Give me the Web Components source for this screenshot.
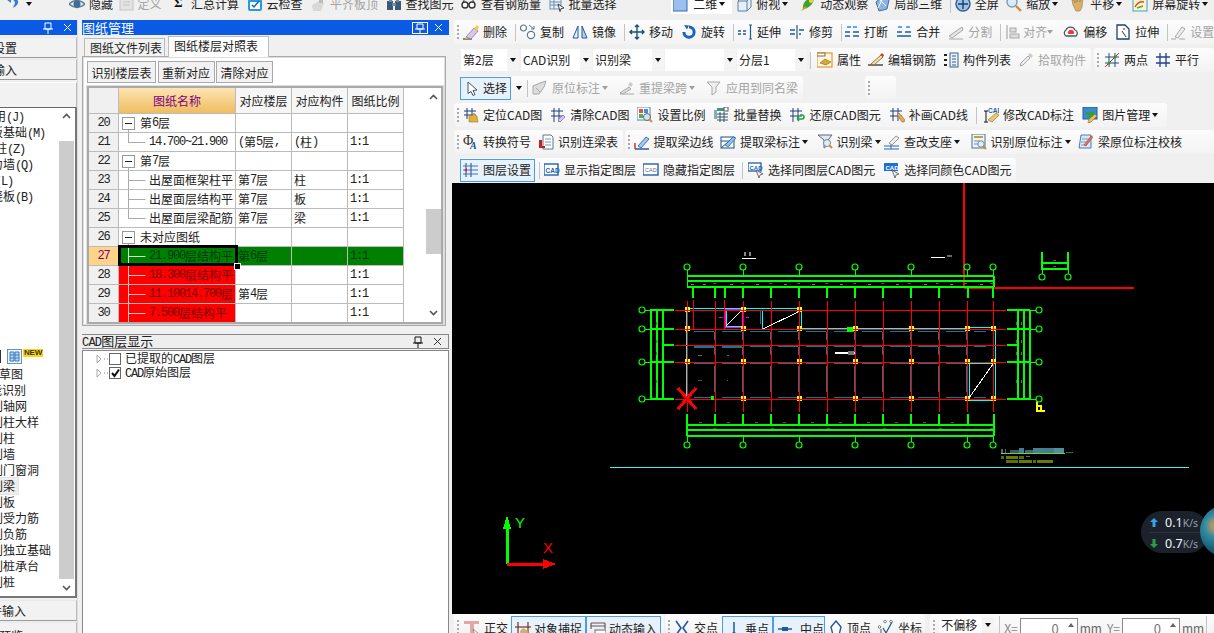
<!DOCTYPE html>
<html lang="zh"><head><meta charset="utf-8"><title>图纸管理</title>
<style>
html,body{margin:0;height:633px;overflow:hidden;background:#f0f0f0;color:#222;font:12px/16px "Noto Sans CJK SC","Noto Sans",sans-serif}
</style></head><body>
<x-app>
  <x-row slot="top" style="height:20px;margin-top:-6px;padding-left:5px">
    <x-tool i="undo" caret style="margin-right:37px;gap:7px"></x-tool>
    <x-bar plain style="gap:7.5px">
      <x-tool i="eye">隐藏</x-tool><x-tool i="def" off style="margin-left:-3px">定义</x-tool><x-tool i="sum" style="margin-left:2px">汇总计算</x-tool><x-tool i="cloudchk">云检查</x-tool><x-tool i="flat" off>平齐板顶</x-tool><x-tool i="bino">查找图元</x-tool><x-tool i="glasses">查看钢筋量</x-tool><x-tool i="batch">批量选择</x-tool>
      <x-tool i="cube2" caret style="margin-left:47px;background:#fff;padding:0 7px 0 2px">二维</x-tool>
      <x-tool i="cube" caret style="margin-left:-3.5px">俯视</x-tool><x-tool i="orbit" style="margin-left:4.5px">动态观察</x-tool><x-tool i="cube3" style="margin-left:-1.5px">局部三维</x-tool><x-sep></x-sep><x-tool i="full" style="margin-left:-3.5px">全屏</x-tool><x-tool i="zoom" caret>缩放</x-tool><x-tool i="hand" caret style="margin-left:4.5px">平移</x-tool><x-tool i="rot2" caret style="margin-left:2.5px">屏幕旋转</x-tool>
    </x-bar>
  </x-row>

  <x-side slot="left"></x-side>

  <x-drawings slot="mid"></x-drawings>
  <x-layers slot="mid2"></x-layers>

  <x-row slot="right" style="margin-top:0">
    <x-bar style="gap:8px;margin-left:4px;padding-left:3px;flex:1"><x-grip></x-grip>
      <x-tool i="erase" style="margin-left:-4px">删除</x-tool><x-sep></x-sep><x-tool i="copy" style="margin-left:-4px">复制</x-tool><x-tool i="mirror">镜像</x-tool><x-sep></x-sep><x-tool i="move" style="margin-left:-4px">移动</x-tool><x-tool i="rotate">旋转</x-tool><x-sep></x-sep><x-tool i="extend" style="margin-left:-5px">延伸</x-tool><x-tool i="trim">修剪</x-tool><x-sep></x-sep><x-tool i="brk" style="margin-left:-6px">打断</x-tool><x-tool i="merge">合并</x-tool><x-tool i="split" off>分割</x-tool><x-sep></x-sep><x-tool i="align" off caret style="margin-left:-4px;gap:2px">对齐</x-tool><x-tool i="offset" style="margin-left:2px">偏移</x-tool><x-tool i="stretch">拉伸</x-tool><x-sep></x-sep><x-tool i="pen" off style="margin-left:-6px">设置</x-tool>
    </x-bar>
  </x-row>
  <x-row slot="right" style="margin-top:4px">
    <x-combo style="width:58px;margin-left:11px">第2层</x-combo><x-combo style="width:71px;margin-left:2px">CAD识别</x-combo><x-combo style="width:71px;margin-left:1px">识别梁</x-combo><x-combo style="width:71px;margin-left:1px"></x-combo><x-combo style="width:70px;margin-left:1px">分层1</x-combo>
    <x-bar style="gap:7px;margin-left:3px;padding-right:5px"><x-sep></x-sep><x-tool i="prop" style="margin-left:-1px">属性</x-tool><x-tool i="rebar">编辑钢筋</x-tool><x-tool i="list">构件列表</x-tool><x-tool i="pick" off>拾取构件</x-tool></x-bar>
    <x-bar style="gap:7px;margin-left:3px;padding-left:3px;flex:1"><x-grip></x-grip><x-tool i="two" style="margin-left:-2px">两点</x-tool><x-tool i="para">平行</x-tool></x-bar>
  </x-row>
  <x-row slot="right" style="margin-top:4px">
    <x-bar style="gap:5px;margin-left:10px;padding-right:5px">
      <x-tool i="cursor" on style="width:51px;padding-left:3px;box-sizing:border-box;height:23px;gap:3px">选择</x-tool><x-caret></x-caret><x-sep style="margin-right:-1px"></x-sep><x-tool i="label" off caret>原位标注</x-tool><x-tool i="span" off caret style="margin-left:6px">重提梁跨</x-tool><x-tool i="apply" off style="margin-left:6px">应用到同名梁</x-tool>
    </x-bar>
    <x-bar style="margin-left:62px;width:31px;padding-left:3px;box-sizing:border-box"><x-grip></x-grip></x-bar>
  </x-row>
  <x-row slot="right" style="margin-top:3px">
    <x-bar style="gap:8px;margin-left:4px;padding:0 9px 0 3px"><x-grip></x-grip>
      <x-tool i="locate" style="margin-left:-4px">定位CAD图</x-tool><x-tool i="clear">清除CAD图</x-tool><x-tool i="scale">设置比例</x-tool><x-tool i="replace">批量替换</x-tool><x-tool i="restore">还原CAD图元</x-tool><x-tool i="draw">补画CAD线</x-tool><x-sep></x-sep><x-tool i="cadedit" style="margin-left:-2px">修改CAD标注</x-tool><x-tool i="pic" caret>图片管理</x-tool>
    </x-bar>
  </x-row>
  <x-row slot="right" style="margin-top:3px">
    <x-bar style="gap:7px;margin-left:4px;padding:0 5px 0 3px"><x-grip></x-grip><x-tool i="phi" style="margin-left:-3px">转换符号</x-tool><x-tool i="lbtable">识别连梁表</x-tool></x-bar>
    <x-bar style="gap:6.5px;margin-left:2px;padding-left:3px;flex:1"><x-grip></x-grip><x-tool i="edge" style="margin-left:-3px">提取梁边线</x-tool><x-tool i="mark" caret>提取梁标注</x-tool><x-tool i="recog" caret style="margin-left:2px">识别梁</x-tool><x-tool i="seat" caret style="margin-left:-3px">查改支座</x-tool><x-tool i="inplace" caret style="margin-left:4px">识别原位标注</x-tool><x-tool i="check" style="margin-left:1px">梁原位标注校核</x-tool></x-bar>
  </x-row>
  <x-row slot="right" style="margin-top:4px">
    <x-bar style="gap:7px;margin-left:10px;padding-right:5px">
      <x-tool i="layer" on style="width:75px;padding-left:2px;box-sizing:border-box;height:23px;gap:4px">图层设置</x-tool><x-sep style="margin-left:-3px"></x-sep><x-tool i="cadshow" style="margin-left:-3px">显示指定图层</x-tool><x-tool i="cadhide">隐藏指定图层</x-tool><x-sep></x-sep><x-tool i="cadsel" style="margin-left:-2px">选择同图层CAD图元</x-tool><x-tool i="cadsel2" style="margin-left:2px">选择同颜色CAD图元</x-tool>
    </x-bar>
  </x-row>

  <x-cad slot="canvas"><x-speed></x-speed></x-cad>

  <x-row slot="status" style="height:19px;align-items:flex-start">
    <x-bar low style="gap:6px;margin-left:4px;padding:0 3px;height:19px"><x-grip style="margin-top:6px"></x-grip><x-tool i="ortho" low style="margin-left:-2px;margin-right:-3px;gap:5px">正交</x-tool><x-tool i="snap" on low style="padding:0 3px;gap:3px;margin-right:-6px">对象捕捉</x-tool><x-tool i="dyn" on low style="padding:0 3px;gap:3px">动态输入</x-tool></x-bar>
    <x-bar low style="gap:6px;margin-left:1px;padding:0 3px;height:19px"><x-grip style="margin-top:6px"></x-grip><x-tool i="cross" low style="margin-left:-2px">交点</x-tool><x-tool i="perp" on low style="padding:0 3px;gap:3px;margin-left:-2px;margin-right:-6px">垂点</x-tool><x-tool i="midp" on low style="padding:0 0 0 3px;gap:7px">中点</x-tool><x-tool i="vert" low style="gap:1px;margin-left:-1px">顶点</x-tool><x-tool i="coord" low style="margin-left:1px">坐标</x-tool></x-bar>
    <x-bar low style="gap:2px;margin-left:5px;padding:0 3px;height:19px;flex:1"><x-grip style="margin-top:6px"></x-grip><x-combo low style="width:55px;margin-left:2px;margin-top:3px;height:16px">不偏移</x-combo><x-sep style="margin:2px 0 0 3px"></x-sep><span style="color:#888;margin:6px 0 0 2px">X=</span><x-spin>0</x-spin><span style="color:#666;margin-top:6px">mm</span><span style="color:#888;margin:6px 0 0 3px">Y=</span><x-spin>0</x-spin><span style="color:#666;margin-top:6px">mm</span><x-sep style="margin-top:2px"></x-sep></x-bar>
  </x-row>
</x-app>

<script>
const B='#1e5aa0',G='#a8a8a8',O='#e8a030';
const line=(d,c=B,w=1)=>`<path d="${d}" fill="none" stroke="${c}" stroke-width="${w}"/>`;
const ICON={
undo:`<path d="M3 1h5a5 5 0 0 1 3 9l-3 2 1-3a3 3 0 0 0-1-5H6v3L1 3z" fill="#3a78d8"/>`,
eye:line('M0 8Q8 1 16 8Q8 15 0 8Z','#5a7a96',1.4)+`<circle cx="8" cy="8" r="3.6" fill="#3f6f98"/>`,
def:`<rect x="2" y="2" width="13" height="12" fill="#e4e4e4" stroke="#c4c4c4"/>`+line('M5 6h7M5 9h7','#c4c4c4'),
sum:`<text x="3" y="11" font-size="13" font-weight="700" font-family="Liberation Serif" fill="#111">Σ</text>`,
cloudchk:`<rect x="1" y="3" width="14" height="12" rx="2" fill="#2a9ae0"/><rect x="3" y="6" width="10" height="7" fill="#fff"/>`+line('M5 9l2 2 5-6','#1868b0',1.5),
flat:`<path d="M2 9l9-5 3 3-3 8H3z" fill="#d8d8d8"/><rect x="9" y="2" width="4" height="5" fill="#bbb"/>`,
bino:`<rect x="1" y="5" width="6" height="9" fill="#3b5a78"/><rect x="9" y="5" width="6" height="9" fill="#3b5a78"/><rect x="3" y="1" width="3" height="5" fill="#6b8aa8"/><rect x="10" y="1" width="3" height="5" fill="#6b8aa8"/><rect x="6" y="7" width="4" height="3" fill="#789"/>`,
glasses:`<circle cx="4" cy="9" r="3" fill="#fff" stroke="#333" stroke-width="1.4"/><circle cx="11" cy="9" r="3" fill="#fff" stroke="#333" stroke-width="1.4"/>`+line('M2 6l2-3M13 6l-2-3','#333'),
batch:`<rect x="1" y="2" width="11" height="11" fill="#e8f0f8" stroke="#6f8fb0"/>`+line('M1 6h11M1 9h11M5 2v11','#6f8fb0')+`<path d="M9 8l6 4-3 .6-1 3z" fill="#fff" stroke="#444"/>`,
cube2:`<rect x="0" y="1" width="14" height="14" fill="#9cc0ee" stroke="#3566b0"/>`,
cube:`<path d="M2 5l4-4h9v10l-4 4H2z" fill="#e4eff8" stroke="#5e7f9e"/>`+line('M2 5h9v10M11 5l4-4','#5e7f9e'),
orbit:`<path d="M3 13C2 7 7 2 13 1c2 3-1 9-6 11z" fill="#43a02e"/><path d="M1 15l4-5 2 2z" fill="#c8a020"/><circle cx="11" cy="5" r="2" fill="#e8d848"/>`,
cube3:`<path d="M2 6l6-5 7 3-2 9-8 2z" fill="#8bb4de" stroke="#3a6ea8"/>`+line('M5 3l7 7M9 2l-5 10','#fff'),
full:`<circle cx="8" cy="8" r="7" fill="#9ec2e8" stroke="#345e8c" stroke-width="1.4"/>`+line('M8 3v10M3 8h10','#1d3f66',1.4),
zoom:`<circle cx="6" cy="6" r="5" fill="#d8ebfa" stroke="#7f9cb8" stroke-width="1.4"/>`+line('M10 10l5 5','#c89030',2.4),
hand:`<path d="M3 9l-1-5 2 0 1 3V2h2v4l1-5h2v5l1-4h2l-1 9-2 4H6z" fill="#d8b068" stroke="#9a7838" stroke-width=".6"/>`,
rot2:`<rect x="1" y="3" width="14" height="12" fill="#fff4c8" stroke="#3aa0d8"/><path d="M3 11q3-6 9-5" fill="none" stroke="#e04a30" stroke-width="1.5"/><path d="M5 12l6-2" stroke="#40b040" stroke-width="1.5"/>`,
erase:line('M0 15h9','#222',1)+`<path d="M3 13l8-9 4 3-7 8z" fill="#d8c8e8" stroke="#8060b0" stroke-width=".7"/><path d="M11 4l3-3 2 2-2 4z" fill="#f0d040"/><path d="M3 13l3 2-4 0z" fill="#e8a030"/>`,
copy:`<circle cx="3.5" cy="4" r="3" fill="#fff" stroke="#5a7894" stroke-width="1.2"/><circle cx="11" cy="11" r="3.6" fill="#fff" stroke="#5a7894" stroke-width="1.2"/>`+line('M9 1l5 4m0-3v3h-3','#5a7894'),
mirror:`<path d="M1 14L6 2v12z" fill="#eaf2fa" stroke="${B}"/><path d="M15 14L10 2v12z" fill="#b8d0ea" stroke="${B}"/>`,
move:line('M8 1v14M1 8h14M6 3l2-2 2 2M6 13l2 2 2-2M3 6L1 8l2 2M13 6l2 2-2 2','#17507e',1.4),
rotate:`<path d="M8 1.5v3A3.6 3.6 0 1 1 4.4 8H1.4A6.6 6.6 0 1 0 8 1.5z" fill="#1c62c0"/><path d="M3 1l5 .5-2 4z" fill="#1c62c0"/>`,
extend:line('M1 7h3M1 10h3M6 7h3M6 10h3',B,1.4)+line('M12 1h3M12 15h3M13.5 1v14',B,1.2),
trim:line('M8 1v14',B,1.2)+line('M1 6h5M1 10h5M10 6h5M10 10h2',B,1.3),
brk:line('M1 12h5M9 12h6M1 8h5M9 8h6',B,1.4)+line('M3 3h4M13 3H9','#2090e0',1.4),
merge:line('M1 12h14M1 8h5M9 8h6',B,1.4)+line('M2 3h4M14 3h-4','#2090e0',1.4),
split:`<path d="M1 12L14 3l1 3L4 14z" fill="#e4e4e4" stroke="${G}"/>`+line('M1 15h14',G),
align:line('M2 1v14',G,1.2)+`<rect x="5" y="4" width="6" height="4" fill="#ddd" stroke="${G}"/><rect x="5" y="10" width="9" height="4" fill="#ddd" stroke="${G}"/>`,
offset:`<path d="M3 12a3.5 3.5 0 0 1 0-6 5 5 0 0 1 9 0 3.5 3.5 0 0 1 1 6z" fill="#fff" stroke="#555" stroke-width="1.3"/><path d="M5.5 10a2 2 0 0 1 0-3 3 3 0 0 1 5 0 2 2 0 0 1 0 3z" fill="#e04040"/>`,
stretch:`<path d="M2 1h8l4 4v10H2z" fill="#fff" stroke="#1d3f7a" stroke-width="1.3"/>`+line('M7 7l4 6M8 5h2','#333'),
pen:line('M1 15h5M9 15h6',G)+`<path d="M5 13l7-10 3 2-7 9z" fill="#eee" stroke="${G}"/>`,
prop:`<rect x="0" y="1" width="15" height="14" fill="#fff7e8" stroke="${O}" stroke-width="1.3"/><rect x="0" y="1" width="8" height="3" fill="#fff" stroke="#8a6a30"/><path d="M3 11l5-4 6 3-5 3z" fill="#d8a838" stroke="#a07018" stroke-width=".7"/>`,
rebar:line('M0 13h15','#222',1.2)+`<path d="M3 12L13 3l2 2-9 8z" fill="#f0e0b0" stroke="#8a5a20" stroke-width=".8"/><path d="M12 3l2-2 2 2-1 2z" fill="#d04030"/>`,
list:`<rect x="7" y="1" width="8" height="14" fill="#eaf1f8" stroke="#39618f"/>`+line('M9 4h4M9 7h4M9 10h4M9 13h4','#39618f')+line('M1 3h3M1 8h3M1 13h3','#222',2),
pick:`<path d="M2 14l1-3 7-7 2 2-7 7z" fill="#eee" stroke="${G}"/><path d="M10 3l2-2 3 3-2 2z" fill="#ccc"/>`,
two:line('M5 1v14M11 1v14M1 5h14M1 11h14','#1d4f86')+line('M1 15L15 1','#d02020')+`<circle cx="5" cy="11" r="1.5" fill="#20a020"/><circle cx="11" cy="5" r="1.5" fill="#20a020"/>`,
para:line('M5 1v14M11 1v14M1 5h14M1 11h14','#26408c',1.3),
cursor:`<path d="M4 2l9 8-4 .5 2 4-2 1-2-4-3 2z" fill="#fff" stroke="#456" stroke-width="1"/>`,
label:`<path d="M1 14V6l7-3 6-2-2 6-5 7z" fill="#ddd" stroke="${G}"/>`+line('M4 8l4 4',G),
span:line('M1 14h14',G)+`<path d="M1 13l9-6 2 2-8 5z" fill="#ddd" stroke="${G}"/><path d="M11 2l3 2-2 3-3-2z" fill="#ccc"/>`,
apply:`<path d="M1 2h13l-4 5v5l-4 3V7z" fill="#eee" stroke="${G}"/>`,
locate:line('M4 1v11M9 1v11M1 4h12M1 8h12','#1d3f7a')+`<path d="M6 15V9l2-1 1 1 2-3 1 2 2 1 1 6z" fill="#e0b040" stroke="#a07820" stroke-width=".6"/>`,
clear:line('M4 1v14M9 1v14M1 4h12M1 9h12','#1d3f7a')+`<path d="M8 13l5-5 2 2-5 5z" fill="#d8c8e8" stroke="#8060b0" stroke-width=".7"/>`,
scale:`<rect x="0" y="0" width="13" height="13" fill="#fff" stroke="#5a7ea8"/><rect x="2" y="2" width="4" height="4" fill="#e05050"/><rect x="7" y="2" width="4" height="4" fill="#4090e0"/><rect x="2" y="7" width="4" height="4" fill="#50b050"/><circle cx="10" cy="10" r="3.5" fill="#cfe4f8" stroke="#667"/>`+line('M12 12l3 3','#c89030',2),
replace:`<rect x="4" y="1" width="9" height="3" fill="#38a070"/><rect x="1" y="3" width="3" height="9" fill="#8ab"/>`+line('M4 7h11M4 10h11M4 13h11M7 5v10M11 5v10','#356')+`<rect x="11" y="0" width="4" height="4" fill="#fff" stroke="#555"/>`,
restore:line('M4 1v14M9 1v11M1 4h12M1 9h12','#1d3f7a')+`<path d="M8 12h5a2 2 0 0 0 0-4h-2M8 12l2-2M8 12l2 2" fill="none" stroke="#20a040" stroke-width="1.5"/>`,
draw:line('M4 1v13M9 1v13M1 4h12M1 9h12','#1d3f7a')+`<path d="M8 8l2-2 6 7-1 2-2 0z" fill="#e0a860" stroke="#a06820" stroke-width=".6"/>`,
cadedit:line('M3 4v11M1 4h4M1 15h4','#111')+`<path d="M5 13l8-7 3 2-7 7z" fill="#e8c870" stroke="#a07820" stroke-width=".7"/><text x="5" y="6" font-size="6.5" font-weight="700" font-family="Liberation Sans" fill="#1d5fb0">CAD</text>`,
pic:`<rect x="1" y="0" width="14" height="12" fill="#3a8ad0" stroke="#1d5fa0"/><path d="M4 5h8v3H9v3H7V8H4z" fill="#30a030"/><path d="M7 12l6-5 2 2-6 6-3 1z" fill="#e8c050" stroke="#907020" stroke-width=".6"/>`,
phi:`<text x="0" y="11" font-size="14" font-family="Liberation Serif" fill="#333">Φ</text><text x="7" y="15" font-size="10" font-weight="700" font-style="italic" font-family="Liberation Serif" fill="#1d4f96">A</text>`,
lbtable:`<path d="M5 1h8l2 2v12H5z" fill="#fff" stroke="#5a7894"/>`+line('M7 5h6M7 8h6M7 11h6','#7a94b0')+`<path d="M1 6h3v6h3v2H1z" fill="#c82020"/>`,
edge:line('M1 15h14','#1d4f96',1.4)+line('M1 9v6','#c03020',1.4)+`<path d="M4 12L12 3l3 2-8 9z" fill="#a0c8f0" stroke="#1d5fa8" stroke-width=".8"/>`,
mark:`<rect x="1" y="3" width="13" height="11" fill="#fff" stroke="#1d4f86"/>`+line('M1 14L14 3M1 7h8','#1d4f86')+`<path d="M5 11l8-8 3 1-8 9z" fill="#8ec0ee" stroke="#1d5fa8" stroke-width=".7"/>`,
recog:`<path d="M1 1h14l-4 5v5l-4 3V6z" fill="#dfe9f2" stroke="#667"/><circle cx="10" cy="9" r="3.5" fill="#e0eefa" stroke="#789"/>`+line('M12.5 11.5L15 14','#c89030',2),
seat:line('M0 12h15M0 15h15','#2a6ab0')+line('M7 9v6','#2a6ab0')+`<path d="M5 9l7-7 3 2-7 7z" fill="#eee" stroke="#999"/>`,
inplace:`<rect x="1" y="0" width="13" height="14" fill="#eef4fa" stroke="#4f6f90"/><rect x="3" y="2" width="9" height="2" fill="#c8a030"/>`+line('M3 7h6M3 10h6','#789')+`<circle cx="10" cy="10" r="3.2" fill="#e0eefa" stroke="#789"/>`+line('M12 12l3 3','#c89030',2),
check:`<path d="M3 1h10v13H1z" fill="#dbe8f6" stroke="#4a7ab0"/>`+line('M4 5h7M3 8h7M3 11h6','#7a9cc4')+`<path d="M6 11l7-9 2 1-7 9z" fill="#e07050" stroke="#a04030" stroke-width=".5"/>`,
layer:line('M3 1v14M8 1v14','#1d3f86')+line('M0 4h15M0 8h15M0 12h15','#3f6fc0')+`<path d="M1 8l3-2v4z" fill="#d03030"/>`,
cadshow:`<rect x="0" y="2" width="14" height="11" fill="#fff" stroke="#2060b0" stroke-width="1.4"/><text x="1.5" y="10.5" font-size="6.5" font-weight="700" font-family="Liberation Sans" fill="#1d5fb0">CAD</text>`,
cadhide:`<rect x="0" y="2" width="15" height="11" fill="#fff" stroke="#2060b0" stroke-width="1.4"/><text x="2" y="10" font-size="5.5" font-family="Liberation Sans" fill="#667">CAD</text>`,
cadsel:`<rect x="0" y="1" width="13" height="8" fill="#fff" stroke="#2060b0" stroke-width="1.3"/><text x="1.5" y="7.5" font-size="6" font-weight="700" font-family="Liberation Sans" fill="#1d5fb0">CAD</text><path d="M8 8l7 4-3 1-1 3z" fill="#eee" stroke="#555" stroke-width=".8"/>`,
cadsel2:`<rect x="0" y="1" width="14" height="8" fill="#1d70d0"/><text x="1.5" y="7.5" font-size="6" font-weight="700" font-family="Liberation Sans" fill="#fff">CAD</text><path d="M8 8l7 4-3 1-1 3z" fill="#eee" stroke="#555" stroke-width=".8"/>`,
ortho:`<path d="M1 1h15v3h-5v12H7V4H1z" fill="#e0a8a8"/><path d="M10 9l5 4-2 .5-1 2z" fill="#fff" stroke="#777" stroke-width=".7"/>`,
snap:line('M3 1v15M13 1v15','#7a3020',1.2)+line('M0 6h16','#7a3020',1.2)+`<path d="M5 10l3-3 5 3-1 5-6 1z" fill="#d0b070"/>`,
dyn:line('M1 2h14M1 5h14M1 2v6M15 2v6','#7a5040',1.2)+`<rect x="5" y="9" width="11" height="7" fill="#fff" stroke="#666"/>`,
cross:line('M2 1l5 7-5 7M14 1L9 8l5 7',B,1.6),
perp:line('M8 1v12M1 13h14',B,1.5)+`<circle cx="8" cy="13" r="2" fill="${B}"/>`,
midp:line('M1 8h14',B,1.5)+`<rect x="5" y="6" width="6" height="4" fill="${B}"/>`,
vert:`<path d="M6 1l5 6-2 8H3L1 7z" fill="#fff" stroke="${B}" stroke-width="1.4"/>`,
coord:line('M5 8l3 5 6-11','#1d5f9e',1.3)+`<circle cx="1.5" cy="7" r="1.3" fill="#fff" stroke="#333" stroke-width=".6"/><circle cx="7" cy="1.5" r="1.3" fill="#fff" stroke="#333" stroke-width=".6"/><circle cx="13" cy="1.5" r="1.3" fill="#fff" stroke="#333" stroke-width=".6"/>`+line('M3 9v5','#555',1)
};
const mix=s=>s.replace(/[!-~]+/g,m=>`<span class="m">${m}</span>`);
const MIXCSS='.m{font:12px/16px "Liberation Mono",monospace;letter-spacing:-1.2px}';
function def(name,css,html,init){customElements.define(name,class extends HTMLElement{connectedCallback(){if(this.shadowRoot)return;const r=this.attachShadow({mode:'open'});r.innerHTML=`<style>${css}</style>`+(typeof html==='function'?html(this):html);init&&init(this,r)}})}

def('x-app',`:host{display:grid;width:1214px;height:633px;overflow:hidden;grid-template-columns:78px 4px 367px 1px 1fr;grid-template-rows:20px 1fr}
.t{grid-column:1/-1;overflow:hidden;display:block}.l{grid-column:1;min-height:0;overflow:hidden}.m{grid-column:3;display:flex;flex-direction:column;min-height:0}.r{grid-column:5;display:flex;flex-direction:column;min-height:0;min-width:0;overflow:hidden}
.s{margin-top:1px;height:431px;flex:none}`,
`<div class="t"><slot name="top"></slot></div><div class="l"><slot name="left"></slot></div><div class="m"><slot name="mid"></slot><slot name="mid2"></slot></div><div class="r"><slot name="right"></slot><div class="s"><slot name="canvas"></slot></div><slot name="status"></slot></div>`);

def('x-row',`:host{display:flex;align-items:center;height:24px;flex:none}`,`<slot></slot>`);
def('x-bar',`:host{display:flex;align-items:center;height:24px;border-radius:3px;background:linear-gradient(#fcfcfc,#f3f3f3);flex:none}:host([plain]){background:none;flex:1}:host([low]){align-items:flex-start}`,`<slot></slot>`);
def('x-grip',`:host{display:block;width:2px;height:14px;flex:none;background:repeating-linear-gradient(#aaa 0 2px,transparent 2px 4px)}`,``);
def('x-sep',`:host{display:block;width:1px;height:17px;flex:none;background:#c4c4c4}`,``);
def('x-caret',`:host{display:block;width:0;height:0;flex:none;border:3px solid transparent;border-top:4px solid #111;border-bottom:0}`,``);
def('x-tool',`:host{display:inline-flex;align-items:center;gap:4px;height:20px;color:#222;white-space:nowrap;flex:none;box-sizing:border-box}
:host([off]){color:#a4a4a4}:host([on]){background:#e8f2fc;border:1px solid #4a9cf0}:host([low]){height:19px;margin-top:2px;padding-top:4px!important;align-items:flex-start}
svg{flex:none;width:16px;height:16px}.c{width:0;height:0;border:3px solid transparent;border-top:4px solid #111;border-bottom:0;margin-left:-2px}:host([off]) .c{border-top-color:#a0a0a0}`,
h=>`<svg viewBox="0 0 16 16">${ICON[h.getAttribute('i')]||''}</svg><slot></slot>${h.hasAttribute('caret')?'<span class="c"></span>':''}`);
def('x-combo',`:host{display:flex;height:22px;align-items:center;background:#fff;flex:none;color:#222;box-sizing:border-box;padding-left:2px;flex:none}:host([low]){height:19px}
.t{flex:1;white-space:nowrap;overflow:hidden}.b{width:12px;align-self:stretch;background:#f4f4f4;display:flex;align-items:center;justify-content:center}.c{border:3px solid transparent;border-top:4px solid #111;border-bottom:0}`,
`<span class="t"><slot></slot></span><span class="b"><i class="c"></i></span>`);
def('x-spin',`:host{display:flex;width:58px;height:18px;margin-top:4px;box-sizing:border-box;border:1px solid #8a8a8a;background:#fff;align-items:flex-start;justify-content:flex-end;color:#777;padding:2px 0 0;flex:none;font-size:13px}
.u{width:0;height:0;border:3px solid transparent;border-bottom:4px solid #666;border-top:0;margin:2px 3px 0 9px}`,`<slot></slot><i class="u"></i>`);

/* ---------- left navigation ---------- */
const TOP=[['用(J)',-6],['板基础(M)',-9],['柱(Z)',-5],['力墙(Q)',-9],['梁(L)',-17],['浇板(B)',-9]];
const LOW=[['草图',-1],['智能识别',-22],['识别轴网',-21],['识别柱大样',-21],['识别柱',-21],['识别墙',-21],['识别门窗洞',-21],['识别梁',-21,1],['识别板',-21],['识别受力筋',-21],['识别负筋',-21],['识别独立基础',-21],['识别桩承台',-21],['识别桩',-21]];
const rowH=([t,x,h])=>`<div class="i"><span class="${h?'h':''}" style="margin-left:${x}px">${mix(t)}</span></div>`;
def('x-title',`:host{display:flex;height:15px;align-items:center;background:#0a5ae6;color:#fff;flex:none;font-size:13px;line-height:15px;overflow:hidden}
.s{flex:1;white-space:nowrap}svg{flex:none}`,
h=>`<span class="s"><slot></slot></span>${h.hasAttribute('box')?'<svg width="16" height="12" style="margin-right:6px"><rect x=".5" y=".5" width="15" height="11" fill="none" stroke="#fff"/><path d="M5 2h6v5H5zM3 7h10M8 7v4" stroke="#fff" fill="none"/></svg>':'<svg width="10" height="12" style="margin-right:10px"><path d="M2 1h6v6H2zM0 7h10M5 7v5" stroke="#fff" fill="none"/></svg>'}<svg width="10" height="10" style="margin-right:${h.getAttribute('end')||5}px"><path d="M1 1l7 7M8 1l-7 7" stroke="#fff"/></svg>`);
def('x-side',`:host{display:flex;flex-direction:column;height:613px;width:78px;overflow:hidden;background:#f0f0f0;border-right:1px solid #ddd;box-sizing:border-box}${MIXCSS}
.b{height:21px;margin-top:1px;background:#f2f2f2;border-top:1px solid #e8e8e8;border-bottom:1px solid #999;line-height:20px;white-space:nowrap;overflow:hidden;flex:none;box-sizing:border-box;border-right:1px solid #bbb}
.gap{height:26px;margin-top:2px;flex:none;background:#f2f2f2;border-top:1px solid #fff;border-bottom:1px solid #666;border-right:1px solid #bbb;box-sizing:border-box}
.list{height:490px;flex:none;background:#fff;border-right:2px solid #777;border-bottom:2px solid #777;display:flex;overflow:hidden;box-sizing:border-box;width:77px}
.c{width:59px;overflow:hidden;flex:none;white-space:nowrap}.i{height:16px;line-height:16px;white-space:nowrap}.h{background:#eee;padding-right:3px;display:inline-block;outline:1px solid #e4e4e4}
.sp{height:145px}.ic{height:17px;position:relative}.ic b{position:absolute;left:0;top:1px;width:1px;height:13px;background:#333}.ic svg{position:absolute;left:7px;top:0}.ic em{position:absolute;left:23px;top:0;font:700 8px/8px "Liberation Sans";background:#ffd800;color:#334;padding:0 1px;letter-spacing:-.2px}
.sb{width:15px;background:#fff;position:relative;flex:none}.th{position:absolute;left:0;right:0;top:33px;height:438px;background:#ccc}.sb svg{position:absolute;left:3px}`,
()=>`<x-title end="4"><span></span></x-title><div class="b" style="margin-top:2px"><span style="margin-left:-7px">${mix('设置')}</span></div><div class="b"><span style="margin-left:-7px">${mix('输入')}</span></div><div class="gap"></div>
<div class="list"><div class="c">${TOP.map(rowH).join('')}<div class="sp"></div><div class="ic"><b></b><svg width="15" height="15"><rect x=".5" y=".5" width="14" height="14" fill="#eef5fc" stroke="#6a92bc"/><path d="M3 3h4v9H3zM8 3h4v9H8zM3 6h4M3 9h4M8 6h4M8 9h4" fill="#b8d8f6" stroke="#3a78c0"/></svg><em>NEW</em></div>${LOW.map(rowH).join('')}</div>
<div class="sb"><div class="th"></div><svg style="top:5px" width="9" height="7"><path d="M1 5l3.5-3.5L8 5" fill="none" stroke="#555" stroke-width="1.6"/></svg><svg style="top:476px" width="9" height="7"><path d="M1 2l3.5 3.5L8 2" fill="none" stroke="#555" stroke-width="1.6"/></svg></div></div>
<div class="b" style="margin-top:2px"><span style="margin-left:-22px">${mix('构件输入')}</span></div><div class="b" style="padding-top:3px"><span style="margin-left:-25px">${mix('报表预览')}</span></div>`);

/* ---------- drawings panel ---------- */
const R=[[20,'g','第6层'],[21,'l','14.700~21.900','(第5层,','(柱)','1:1'],[22,'g','第7层'],[23,'c','出屋面框架柱平','第7层','柱','1:1'],[24,'c','出屋面层结构平','第7层','板','1:1'],[25,'l','出屋面层梁配筋','第7层','梁','1:1'],[26,'g','未对应图纸'],[27,'s','21.900层结构平','第6层','','1:1'],[28,'r','18.300层结构平','','','1:1'],[29,'r','11.10014.700层','第4层','','1:1'],[30,'r','7.500层结构平','','','1:1']];
function tree(k,color){
 if(k==='g')return `<svg width="21" height="19"><path d="M9.500 15v4" stroke="#aaa"/><rect x="3.500" y="3.500" width="12" height="12" fill="#fff" stroke="#999"/><path d="M6 9.500h7" stroke="#222"/></svg>`;
 const v=k==='l'?'M9.500 0v10':'M9.500 0v19';
 return `<svg width="30" height="19"><path d="${v}M9.500 9.500h17" stroke="${color}" fill="none"/></svg>`;
}
def('x-drawings',`:host{display:block;height:306px;flex:none;background:#f0f0f0;position:relative}${MIXCSS}
.tabs{display:flex;height:21px;align-items:flex-end;padding-left:2px;gap:4px}.tab{height:17px;line-height:17px;padding:0 4px 0 5px;background:#f2f2f2;border:1px solid #bbb;border-bottom:0;color:#222;width:70px;white-space:nowrap}
.tab.a{height:20px;line-height:18px;background:#fff;width:90px;margin-left:-1px;position:relative;top:1px;z-index:1}
.body{height:270px;box-sizing:border-box;border:2px solid #ddd;outline:1px solid #aaa;outline-offset:-1px;background:#fff;margin-right:3px;padding:3px 3px 0 3px}
.btns{display:flex;height:23px;gap:1.500px}.btn{padding:0 3.500px;height:22px;line-height:21px;background:#f2f2f2;border:1px solid #aaa;white-space:nowrap;box-sizing:border-box}
.sheet{margin-top:2px;height:238px;border:2px solid #aaa;outline:1px solid #ddd;box-sizing:border-box;position:relative;overflow:hidden;background:#fff;width:356px}
.g{display:grid;grid-template-columns:30px 117px 56px 56px 56px;grid-auto-rows:19px;width:315px;margin-left:0}
.c{border-right:1px solid #bbb;border-bottom:1px solid #bbb;box-sizing:border-box;line-height:18px;white-space:nowrap;overflow:hidden;padding-left:2px;display:flex;align-items:center}.c .m{line-height:18px}
.n{background:#f0f0f0;justify-content:center;padding:0}.nm{padding:0}
.hd{height:26px;line-height:24px;background:#f6f6f6;justify-content:center;padding:0}.hd.nm{background:linear-gradient(#fde5b4,#efbc5e);color:#800080;font-size:12px}.hd.n{background:#f0f0f0}
.sel{background:#008000;color:#003a10}.red{background:#f00;color:#7a0000}.n.act{background:#ffd488;color:#800080}
.cur{position:absolute;left:29px;top:157px;width:120px;height:21px;border:3px solid #000;box-sizing:border-box;pointer-events:none}.hnd{position:absolute;left:145px;top:175px;width:5px;height:5px;background:#000;border:1px solid #fff}
.sb{position:absolute;right:0;top:0;bottom:0;width:15px;background:#fff}.sb i{position:absolute;left:0;right:0;top:121px;height:45px;background:#ccc}.sb svg{position:absolute;left:3px}`,
()=>`<x-title box end="5"><span style="margin-left:0">图纸管理</span></x-title>
<div class="tabs"><div class="tab">图纸文件列表</div><div class="tab a">图纸楼层对照表</div></div>
<div class="body"><div class="btns"><div class="btn">识别楼层表</div><div class="btn">重新对应</div><div class="btn">清除对应</div></div>
<div class="sheet"><div class="g" style="grid-template-rows:26px;">
<div class="c hd n"></div><div class="c hd nm">图纸名称</div><div class="c hd">对应楼层</div><div class="c hd">对应构件</div><div class="c hd">图纸比例</div>
${R.map(([n,k,t,a='',b='',d=''])=>{const col=k==='g'?'':k==='s'?'sel':k==='r'?'red':'';
 const lc=k==='s'||k==='r'?(k==='s'?'#cfe8cf':'#f4c8c8'):'#aaa';
 return `<div class="c n ${n===27?'act':''}"><span class="m">${n}</span></div><div class="c nm ${col}">${tree(k,lc)}${mix(t)}</div>`+
 `<div class="c ${k==='s'?'sel':''}">${mix(a)}</div><div class="c ${k==='s'?'sel':''}">${mix(b)}</div><div class="c ${k==='s'?'sel':''}">${mix(d)}</div>`}).join('')}
</div><div class="cur"></div><div class="hnd"></div>
<div class="sb"><i></i><svg style="top:6px" width="9" height="7"><path d="M1 5l3.500-3.500L8 5" fill="none" stroke="#555" stroke-width="1.600"/></svg><svg style="top:221px" width="9" height="7"><path d="M1 2l3.500 3.500L8 2" fill="none" stroke="#555" stroke-width="1.600"/></svg></div>
</div></div>`);

def('x-layers',`:host{display:flex;flex-direction:column;flex:1;min-height:0;margin-top:8px;background:#f0f0f0}${MIXCSS}
.t{height:15px;flex:none;box-sizing:border-box;background:#eee;border:1px solid #888;border-width:1px 1px 1px 0;display:flex;align-items:center;line-height:13px;font-size:13px;overflow:hidden}.t .s{flex:1;white-space:nowrap}.t svg{flex:none}.t .m{line-height:13px;letter-spacing:-.8px}
.b{flex:1;margin-top:1px;background:#fff;border:1px solid #888;border-bottom:0;padding-top:1px;box-sizing:border-box}.r{height:14px;display:flex;align-items:center;padding-left:12px;white-space:nowrap}
.r svg{flex:none}`,
()=>{const rr=(c,t)=>`<div class="r"><svg width="27" height="14"><path d="M2 3l4 4-4 4z" fill="#fff" stroke="#aaa"/><path d="M9 7h1M12 7h1" stroke="#888"/><rect x="14.500" y="1.500" width="11" height="11" fill="#fff" stroke="#666"/>${c?'<path d="M17 7l2.500 3L24 3.500" fill="none" stroke="#111" stroke-width="2"/>':''}</svg><span style="margin-left:3px">${mix(t)}</span></div>`;
return `<div class="t"><span class="s">${mix('CAD图层显示')}</span><svg width="10" height="12" style="margin-right:10px"><path d="M2 1h6v6H2zM0 7h10M5 7v5" stroke="#111" fill="none"/></svg><svg width="10" height="10" style="margin-right:5px"><path d="M1 1l7 7M8 1l-7 7" stroke="#333"/></svg></div><div class="b">${rr(0,'已提取的CAD图层')}${rr(1,'CAD原始图层')}</div>`});

/* ---------- CAD canvas ---------- */
def('x-cad',`:host{display:block;height:431px;background:#000;position:relative;overflow:hidden;margin-left:2px}svg{display:block;position:absolute;left:0;top:0}circle,text{shape-rendering:auto}`,
()=>{
 const GR='#00ff00',RD='#ff0000',CY='#00ffff',TE='#12769a',YE='#ffff00';
 let s='';const L=(a,b,c,d,col,w=1)=>s+=`<line x1="${a}" y1="${b}" x2="${c}" y2="${d}" stroke="${col}" stroke-width="${w}"/>`;
 const RT=(x,y,w,h,c)=>s+=`<rect x="${x}" y="${y}" width="${w}" height="${h}" fill="${c}"/>`;
 const C=(x,y)=>s+=`<circle cx="${x}" cy="${y}" r="3" fill="#000" stroke="${GR}" stroke-width="1.200"/>`;
 const main=[687,743,799,855,911,967,993];
 const ys=[310,329,362,399],ysa=[310,329,345,362,399];
 L(964,183,964,288,RD,2);L(964,288,1134,288,RD,2);
 for(const y of[276,281,287,425,430,436])L(687,y,994,y,GR,2);
 L(687,276,687,287,GR,1);L(994,276,994,287,GR,2);L(687,414,687,436,GR,2);L(994,414,994,436,GR,2);
 for(const x of[693,715,725,743,771,799,827,855,883,911,939,968,993]){L(x,287,x,298,GR,2)}
 for(const x of[715,743,771,799,827,855,883,911,939,968]){L(x,414,x,425,GR,2)}
 for(const x of main){L(x,270,x,276,GR);L(x,436,x,442,GR);C(x,267);C(x,445)}
 for(const x of[651,657,663])L(x,310,x,399,GR,2);for(const x of[1018,1024,1030])L(x,310,x,399,GR,2);
 for(const y of ysa){L(y===345?663:650,y,674,y,GR,2);L(1007,y,y===345?1018:1030,y,GR,2)}
 for(const y of ys){L(645,y,650,y,GR);L(1030,y,1036,y,GR);C(642,y);C(1039,y)}
 for(const y of[331,346,362,397]){for(const x of[694,722,750,778,806,834,862,890,918,946,974]){RT(x,y,x===974?12:20,y===362||(y===346&&x<730)?2:1,TE)}}
 for(const x of[715,743,771,799,827,855,883,911,939,967]){RT(x-1,332,2,8,TE);RT(x-1,347,2,8,TE);RT(x-1,366,2,26,TE)}
 RT(693,311,1,13,TE);RT(760,311,1,13,TE);
 s+=`<path d="M686 308H801V328H967V327H995V400H969V399H686Z" fill="none" stroke="${CY}"/>`;
 s+=`<path d="M969 398V363H993" fill="none" stroke="${CY}"/><path d="M762 311V329" stroke="${CY}"/>`;
 s+=`<path d="M725 309H743V327H725Z" fill="none" stroke="#ff00ff"/>`;L(743,309,743,327,'#ff00ff',2);
 s+=`<path d="M726 310V326H741" fill="none" stroke="${CY}"/>`;L(719,317,723,317,'#e000e0');L(746,317,749,317,'#e000e0');
 for(const y of ys.concat(345))L(675,y,1006,y,RD);
 for(const x of [715,743,771,799,827,855,883,911,939,967,993,687])L(x,301,x,412,RD);
 L(693,300,693,329,RD);L(724,300,724,329,RD);
 const yp=[[687,310],[743,310],[799,310]];for(const y of[329,362])for(const x of main)yp.push([x,y]);for(const x of main.slice(1))yp.push([x,399]);
 for(const[x,y]of yp){RT(x-2,y-3,5,5,YE);L(x-2,y,x+3,y,RD);L(x,y-3,x,y+2,RD)}
 L(678,388,696,409,RD,3);L(696,388,678,409,RD,3);
 for(const[a,b,c,d]of[[726,326,741,311],[763,329,798,312],[969,398,993,364]])L(a,b,c,d,'#fff');
 L(742,258,756,258,'#fff');L(931,257,945,257,'#fff');L(835,353,855,353,'#fff',1.500);
 RT(744,252,2,4,'#888');RT(749,252,2,4,'#888');RT(947,255,5,2,'#666');RT(848,351,6,4,'#777');
 RT(847,327,6,5,GR);RT(711,396,3,4,GR);
 for(const x of[713,741,769,797,825,853,881,908,936,964,990])RT(x,283,3,1,'#555');
 for(const x of[691,703,730,756,784,812,840,868,896,924,950,980])RT(x,284,3,1,'#777');
 for(const x of[699,727,755,783,811,839,867,895,923,951])RT(x,422,3,1,'#555');
 for(const x of[713,771,827,883,939,990])RT(x,428,3,1,'#555');
 for(const y of[322,340,352,380]){RT(656,y,1,3,'#666');RT(1016,y,1,3,'#666');RT(1021,y,1,3,'#666')}
 RT(698,355,4,1,'#666');RT(727,355,2,1,'#666');RT(698,380,4,1,'#555');RT(727,380,1,1,'#555');
 L(1042,252,1042,270,GR,2);L(1068,252,1068,270,GR,2);L(1042,263,1068,263,GR,2);L(1042,269,1068,269,GR,2);L(1042,270,1042,274,GR);L(1068,270,1068,274,GR);C(1042,277);C(1068,277);RT(1053,260,3,1,'#555');RT(1053,266,3,1,'#555');
 s+=`<path d="M1036.500 402V411H1045M1036.500 406H1041V411" fill="none" stroke="${YE}" stroke-width="2"/>`;
 RT(1001,449,2,4,'#4a6a7a');RT(1005,449,1,4,'#4a6a7a');RT(1010,450,9,3,'#3a5a6a');RT(1019,448,5,5,'#3f7f8f');RT(1025,450,8,3,'#3a6a7a');RT(1033,448,9,5,'#4a7f8f');RT(1042,448,7,5,'#3f7f8f');RT(1049,448,5,5,'#4a7a8a');RT(1054,448,10,5,'#4f8f9f');RT(1066,452,7,1,'#2a6a6a');
 L(1001,453,1065,453,'#70d040');
 RT(1001,456,3,3,'#556b00');RT(1006,456,12,3,'#6a7a00');RT(1019,456,5,3,'#556b00');RT(1026,456,4,1,'#6a7a00');
 RT(1006,460,12,3,'#5f6f00');RT(1019,460,13,3,'#6a7a00');RT(1033,460,3,3,'#5f6f00');RT(1037,460,16,3,'#6a7a00');
 L(610,467.500,1189,467.500,'#3ff0f8');
 L(507,528,507,564,GR,3);s+=`<path d="M507 515l4 14h-8z" fill="${GR}"/>`;L(507,564,546,564,RD,3);s+=`<path d="M556 564l-13-5v10z" fill="${RD}"/>`;
 s+=`<text x="515" y="528" font-size="15" font-family="Liberation Sans" fill="${GR}">Y</text><text x="543" y="553" font-size="15" font-family="Liberation Sans" fill="${RD}">X</text>`;
 return `<svg width="762" height="431" viewBox="452 183 762 431" shape-rendering="crispEdges">${s}</svg><slot></slot>`;
});
def('x-speed',`:host{position:absolute;left:689px;top:328px;width:73px;height:42px;display:block;font:12px/21px "Noto Sans","Noto Sans CJK SC",sans-serif}
.p{position:absolute;left:0;top:0;width:68px;height:42px;border-radius:21px;background:#1b222c;color:#f4f8fc}
.r{position:absolute;left:24px;white-space:nowrap;font-size:12.5px}.r small{font-size:10.5px;color:#95a0ac}.d{position:absolute;left:8px;right:4px;top:21px;height:1px;background:#2a323e}
svg{position:absolute}.g{position:absolute;left:59px;top:-6px;width:52px;height:52px;border-radius:50%;background:radial-gradient(circle at 30% 40%,#a89868 0 8%,#2f8aa0 24%,#0e4a68 60%,#123 100%)}`,
`<div class="p"><div class="d"></div><div class="r" style="top:1px">0.1<small>K/s</small></div><div class="r" style="top:22px">0.7<small>K/s</small></div>
<svg style="left:9px;top:7px" width="8" height="9"><path d="M4 0l4 4H5.500v5h-3V4H0z" fill="#3aa0e8"/></svg><svg style="left:9px;top:28px" width="8" height="9"><path d="M4 9L0 5h2.500V0h3v5H8z" fill="#28a040"/></svg></div><div class="g"></div>`);
</script>
</body></html>
